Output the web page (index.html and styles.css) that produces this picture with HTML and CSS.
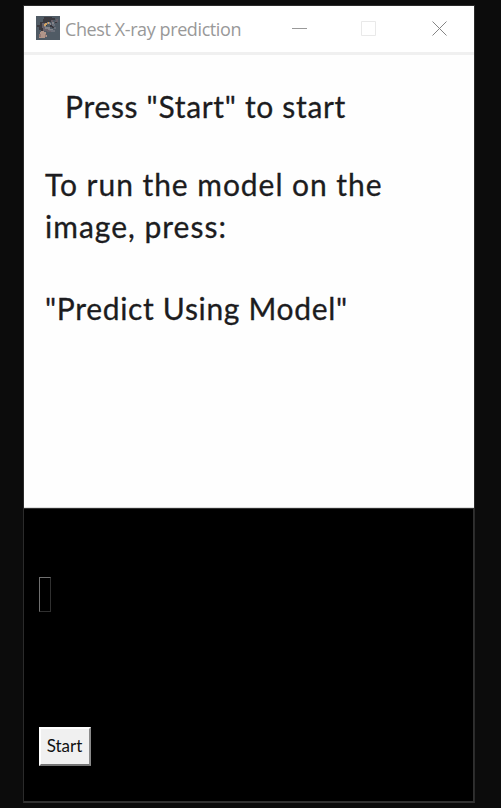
FILE: index.html
```
<!DOCTYPE html>
<html lang="en">
<head>
<meta charset="utf-8">
<title>Chest X-ray prediction</title>
<link rel="stylesheet" href="styles.css">
</head>
<body>
<main class="window">
  <header class="titlebar">
    <svg class="app-icon" width="24" height="24" viewBox="0 0 24 24" shape-rendering="crispEdges">
      <path fill="#505b65" d="M0 0h24v24H0z"/>
      <path fill="#3b3a40" d="M8 1h8v1h3v2h-3v2h-5v4H9v2H5v2H3v-3H1V9h3V6h3V3h1z"/>
      <path fill="#67616a" d="M6 7h3v5h4v2h5v2h-7v-1H7v-3H6zM15 4h2v2h-2zM20 3h2v3h-3V5h1z"/>
      <path fill="#85848a" d="M8 9h2v2h4v2h3v1h-5v-1H9v-2H8zM16 6h2v2h-2zM14 7h1v2h-1zM11 6h3v2h-3z"/>
      <path fill="#38363c" d="M14 9h3v2h3v1h-4v-1h-2zM19 6h2v1h-2zM5 12h2v3H5z"/>
      <path fill="#6b707a" d="M16 8h3v2h-3zM18 11h2v2h-2zM13 14h6v2h-4v-1h-2z"/>
      <path fill="#d0a263" d="M9 7h2v2h-1v1H8V8h1zM12 6h1v2h-1z"/>
      <path fill="#b09589" d="M5 15h3v1h2v3h1v2H9v1H3v-4h1v-2h1z"/>
      <path fill="#967a75" d="M3 18h2v3H3zM9 18h1v3H9z"/>
    </svg>
    <h1 class="title">Chest X-ray prediction</h1>
    <svg class="controls" width="156" height="16" viewBox="0 0 156 16" fill="none">
      <path stroke="#999" d="M0 7.5h15"/>
      <path stroke="#e9e9e9" d="M69.500 .5h14v14h-14z"/>
      <path stroke="#858585" d="M140.500 .5l14 14M154.500 .5l-14 14"/>
    </svg>
  </header>
  <section class="instructions">
    <p class="line first">Press "Start" to start</p>
    <p class="line second">To run the model on the</p>
    <p class="line third">image, press:</p>
    <p class="line fourth">"Predict Using Model"</p>
  </section>
  <section class="panel">
    <div class="field"></div>
    <button class="start" type="button"><span class="start-label">Start</span></button>
  </section>
</main>
</body>
</html>
```
FILE: styles.css
```
* { box-sizing: border-box; }
body { margin: 0; height: 808px; background: #0c0c0c; overflow: hidden; padding: 5px 26px 5px 23px; }
.window { width: 452px; height: 798px; border: 1px solid #2b2b2b; border-bottom: 2px solid #333; display: flex; flex-direction: column; background: #000; }
.titlebar { height: 49px; flex: none; background: #fff; border-bottom: 3px solid #f0f0f0; display: flex; align-items: flex-start; padding-left: 12px; }
.app-icon { margin-top: 10px; flex: none; }
.title { margin: 10px 0 0 5px; width: 227px; font: 400 18px/26px "Open Sans", sans-serif; color: #999; white-space: nowrap; letter-spacing: -.4px; }
.controls { margin-top: 15px; flex: none; }
.instructions { height: 453px; flex: none; background: #fefefe; border-bottom: 1px solid #ddd; padding: 30px 0 0 21px; }
.line { margin: 0; height: 42px; font: 400 30px/42px "Lato", sans-serif; color: #1c1c20; white-space: nowrap; -webkit-text-stroke: .3px #1c1c20; }
.first { margin-left: 20px; letter-spacing: .68px; }
.second { margin-top: 36px; letter-spacing: .95px; }
.third { letter-spacing: 1px; }
.fourth { margin-top: 40px; letter-spacing: .68px; }
.panel { flex: 1; border: 1px solid #303030; border-width: 1px 1px 0 0; padding: 68px 0 0 15px; }
.field { width: 12px; height: 35px; border: 1px solid; border-color: #707070 #303030 #303030 #707070; }
.start { display: block; margin-top: 115px; width: 52px; height: 39px; padding: 0; border: 2px solid; border-color: #fff #8a8a8a #747474 #fff; background: #f0f0f0; color: #111; font: 400 17px/34px "Lato", sans-serif; text-align: center; }
.start-label { display: block; margin: -1px 0 0 -1px; }
```
